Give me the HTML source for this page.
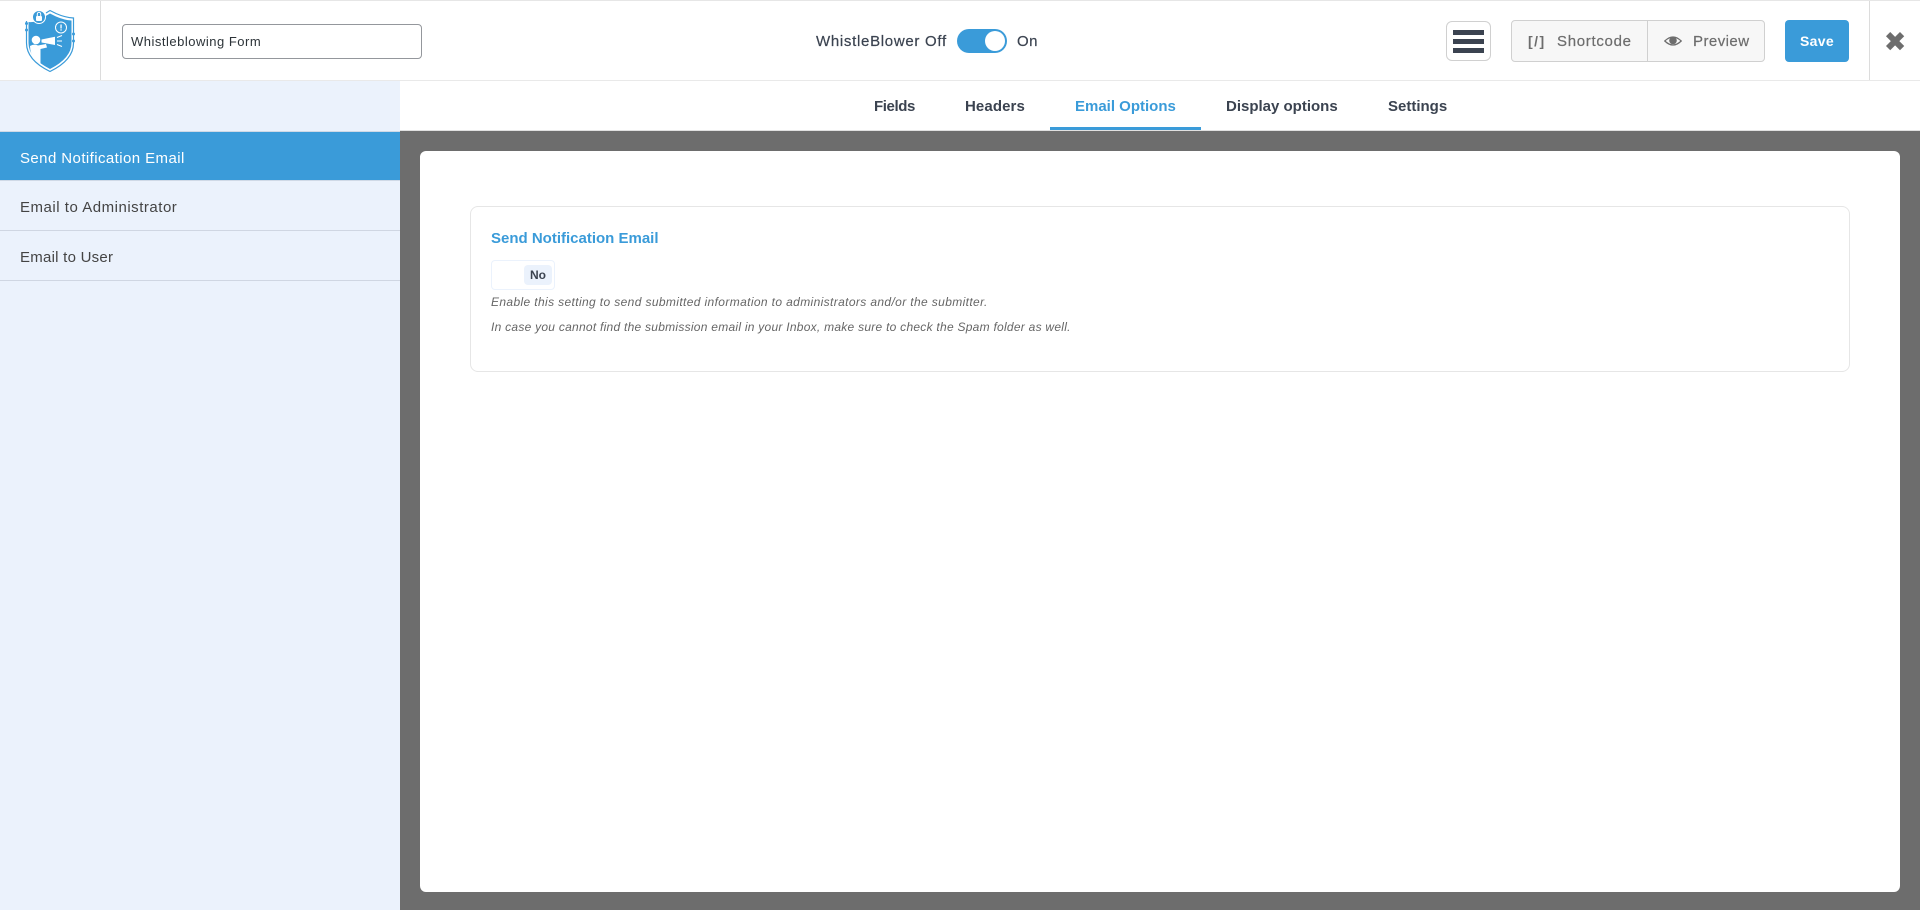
<!DOCTYPE html>
<html lang="en"><head><meta charset="utf-8"><title>Whistleblowing Form</title>
<style>
*{box-sizing:border-box}
html,body{margin:0;padding:0;width:1920px;height:910px;overflow:hidden;background:#fff;font-family:"Liberation Sans",Arial,sans-serif;color:#3b4350}
.a{position:absolute;white-space:nowrap}
.t{position:absolute;white-space:nowrap;line-height:20px;height:20px}
.m{-webkit-text-stroke:.2px currentColor}
</style></head><body>
<div class="a" style="left:0;top:0;width:1920px;height:1px;background:#e6e6e6"></div>
<div class="a" style="left:0;top:80px;width:1920px;height:1px;background:#e9e9e9"></div>
<div class="a" style="left:100px;top:1px;width:1px;height:79px;background:#dcdcdc"></div>
<div class="a" style="left:1869px;top:1px;width:1px;height:79px;background:#dcdcdc"></div>

<svg class="a" style="left:20px;top:5px" width="60" height="70" viewBox="20 5 60 70">
<path d="M46 13 L50 10.500 L56 13.500 Q65 17.500 73.500 18 L73.500 43 Q73.500 60 50 71.500 Q26.500 60 26.500 43 L26.500 21" fill="none" stroke="#3a9bd9" stroke-width="1.200"/>
<path d="M50 13.500 L56 16.500 Q64 20 71.500 20.500 L71.500 43 Q71.500 58 50 69 Q28.500 58 28.500 43 L28.500 22 Q36 23 44 17Z" fill="#3a9bd9"/>
<circle cx="39" cy="17" r="6.500" fill="#3a9bd9" stroke="#fff" stroke-width="1"/>
<rect x="36" y="16" width="6" height="5" rx="1" fill="#fff"/>
<path d="M37.300 16v-2a1.700 1.700 0 0 1 3.400 0v2" fill="none" stroke="#fff" stroke-width="1"/>
<circle cx="61" cy="27.500" r="5.500" fill="none" stroke="#fff" stroke-width="1"/>
<rect x="60.400" y="24.500" width="1.300" height="4" fill="#fff"/><rect x="60.400" y="29.300" width="1.300" height="1.300" fill="#fff"/>
<circle cx="36" cy="40" r="4.300" fill="#fff"/>
<path d="M41.500 39.500 L55 36.700 L55 45 L41.500 42.500Z" fill="#fff"/>
<path d="M30 46 Q34 43.500 38 45.500 L46 44 L47 47.500 L40.500 49 L40.500 64 L35.500 60.500 Q30 54 30 46Z" fill="#fff"/>
<path d="M57 37.500l5-2M57 41h5M57 44.500l5 2" stroke="#fff" stroke-width="1" fill="none"/>
<circle cx="26.500" cy="23.500" r="1.500" fill="#3a9bd9"/><circle cx="26.500" cy="30" r="1.500" fill="#3a9bd9"/><circle cx="73.500" cy="34" r="1.500" fill="#3a9bd9"/><circle cx="73.500" cy="41" r="1.500" fill="#3a9bd9"/>
</svg>

<div class="a" style="left:122px;top:24px;width:300px;height:35px;border:1px solid #94979c;border-radius:4px;background:#fff;padding:0 8px;font-size:13px;line-height:33px;color:#2c3338;letter-spacing:.5px">Whistleblowing Form</div>

<span class="t m" style="left:816px;top:32px;font-size:15px;letter-spacing:.7px;color:#3b4350">WhistleBlower Off</span>
<div class="a" style="left:957px;top:29px;width:50px;height:24px;border-radius:12px;background:#3a9bd9"></div>
<div class="a" style="left:985px;top:31px;width:20px;height:20px;border-radius:50%;background:#fff"></div>
<span class="t m" style="left:1017px;top:32px;font-size:15px;letter-spacing:.5px">On</span>

<div class="a" style="left:1446px;top:21px;width:45px;height:40px;border:1px solid #d0d0d0;border-radius:6px;background:#fff"></div>
<div class="a" style="left:1453px;top:30px;width:31px;height:5px;background:#3b4350"></div>
<div class="a" style="left:1453px;top:39px;width:31px;height:5px;background:#3b4350"></div>
<div class="a" style="left:1453px;top:48px;width:31px;height:5px;background:#3b4350"></div>

<div class="a" style="left:1511px;top:20px;width:254px;height:42px;border:1px solid #d0d0d0;border-radius:4px;background:#f7f7f7"></div>
<div class="a" style="left:1647px;top:21px;width:1px;height:40px;background:#d0d0d0"></div>
<span class="t" style="left:1528px;top:31px;font-size:14px;font-weight:bold;letter-spacing:1.500px;color:#6d6d6d">[/]</span>
<span class="t m" style="left:1557px;top:32px;font-size:15px;letter-spacing:.7px;color:#6d6d6d">Shortcode</span>
<svg class="a" style="left:1664px;top:36px" width="18" height="10" viewBox="0 0 18 10"><path d="M.8 5Q9-3 17.200 5Q9 13 .8 5Z" fill="none" stroke="#6d6d6d" stroke-width="1.300"/><circle cx="9" cy="4.500" r="3.800" fill="#6d6d6d"/></svg>
<span class="t m" style="left:1693px;top:32px;font-size:15px;letter-spacing:.45px;color:#6d6d6d">Preview</span>

<div class="a" style="left:1785px;top:20px;width:64px;height:42px;border-radius:4px;background:#3a9bd9;color:#fff;font-size:14px;font-weight:bold;text-align:center;line-height:42px;letter-spacing:.3px">Save</div>
<svg class="a" style="left:1885px;top:32px" width="20" height="20" viewBox="0 0 20 20"><path d="M3.100 2.100L17.100 16.100M17.100 2.100L3.100 16.100" stroke="#6d6d6d" stroke-width="6"/></svg>

<div class="a" style="left:0;top:81px;width:400px;height:829px;background:#ebf2fc"></div>
<div class="a" style="left:0;top:131px;width:400px;height:1px;background:#cfd9e6"></div>
<div class="a" style="left:0;top:132px;width:400px;height:48px;background:#3a9bd9"></div>
<div class="a" style="left:0;top:180px;width:400px;height:1px;background:#cfd9e6"></div>
<div class="a" style="left:0;top:230px;width:400px;height:1px;background:#cfd6e2"></div>
<div class="a" style="left:0;top:280px;width:400px;height:1px;background:#cfd6e2"></div>
<span class="t" style="left:20px;top:149px;font-size:15px;letter-spacing:.42px;color:#fff">Send Notification Email</span>
<span class="t" style="left:20px;top:198px;font-size:15px;letter-spacing:.52px;color:#444">Email to Administrator</span>
<span class="t" style="left:20px;top:248px;font-size:15px;letter-spacing:.25px;color:#444">Email to User</span>

<span class="t" style="left:874px;top:97px;font-size:15px;font-weight:bold;letter-spacing:-.4px;color:#3b4350">Fields</span>
<span class="t" style="left:965px;top:97px;font-size:15px;font-weight:bold;letter-spacing:.1px;color:#3b4350">Headers</span>
<span class="t" style="left:1075px;top:97px;font-size:15px;font-weight:bold;color:#3a9bd9">Email Options</span>
<span class="t" style="left:1226px;top:97px;font-size:15px;font-weight:bold;color:#3b4350">Display options</span>
<span class="t" style="left:1388px;top:97px;font-size:15px;font-weight:bold;color:#3b4350">Settings</span>
<div class="a" style="left:1050px;top:127px;width:151px;height:3px;background:#3a9bd9"></div>

<div class="a" style="left:400px;top:130px;width:1520px;height:1px;background:#e0e0e0"></div>
<div class="a" style="left:400px;top:131px;width:1520px;height:779px;background:#6d6d6d"></div>
<div class="a" style="left:420px;top:151px;width:1480px;height:741px;background:#fff;border-radius:6px"></div>
<div class="a" style="left:470px;top:206px;width:1380px;height:166px;border:1px solid #e6e6e6;border-radius:8px"></div>
<span class="t" style="left:491px;top:229px;font-size:15px;font-weight:bold;color:#3a9bd9">Send Notification Email</span>
<div class="a" style="left:491px;top:260px;width:64px;height:30px;border:1px solid #ebf2fc;border-radius:4px"></div>
<div class="a" style="left:524px;top:265px;width:28px;height:20px;background:#ebf2fc;border-radius:4px;text-align:center;font-size:12px;font-weight:bold;line-height:20px;color:#3b4350">No</div>
<span class="t" style="left:491px;top:292px;font-size:12px;font-style:italic;letter-spacing:.37px;color:#666">Enable this setting to send submitted information to administrators and/or the submitter.</span>
<span class="t" style="left:491px;top:317px;font-size:12px;font-style:italic;letter-spacing:.26px;color:#666">In case you cannot find the submission email in your Inbox, make sure to check the Spam folder as well.</span>
</body></html>
